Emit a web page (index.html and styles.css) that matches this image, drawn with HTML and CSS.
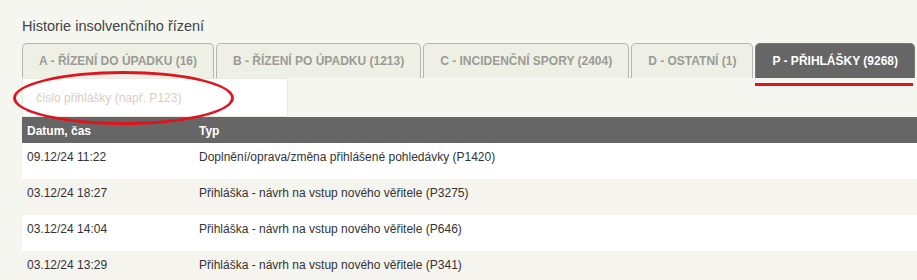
FILE: index.html
```html
<!DOCTYPE html>
<html lang="cs">
<head>
    <meta charset="UTF-8">
    <meta name="viewport" content="width=device-width, initial-scale=1.0">
    <title>Historie insolvenčního řízení</title>
    <link rel="stylesheet" href="styles.css">
</head>
<body>
    <div class="page">
        <h2 class="title">Historie insolvenčního řízení</h2>

        <!-- Záložky oddílů -->
        <div class="tabs">
            <div class="tab">A - Řízení do úpadku (16)</div>
            <div class="tab">B - Řízení po úpadku (1213)</div>
            <div class="tab">C - Incidenční spory (2404)</div>
            <div class="tab">D - Ostatní (1)</div>
            <div class="tab active">P - Přihlášky (9268)</div>
            <div class="tab">&nbsp;</div>
        </div>

        <input class="search" type="text" placeholder="číslo přihlášky (např. P123)">

        <table class="history">
            <thead>
                <tr>
                    <th class="col-date">Datum, čas</th>
                    <th>Typ</th>
                </tr>
            </thead>
            <tbody>
                <tr>
                    <td>09.12/24 11:22</td>
                    <td>Doplnění/oprava/změna přihlášené pohledávky (P1420)</td>
                </tr>
                <tr>
                    <td>03.12/24 18:27</td>
                    <td>Přihláška - návrh na vstup nového věřitele (P3275)</td>
                </tr>
                <tr>
                    <td>03.12/24 14:04</td>
                    <td>Přihláška - návrh na vstup nového věřitele (P646)</td>
                </tr>
                <tr>
                    <td>03.12/24 13:29</td>
                    <td>Přihláška - návrh na vstup nového věřitele (P341)</td>
                </tr>
            </tbody>
        </table>

        <!-- zvýraznění -->
        <div class="mark-ellipse"></div>
    </div>
</body>
</html>
```

FILE: styles.css
```css
html, body { margin: 0; height: 100%; overflow: hidden; }
body { font-family: "Liberation Sans", Arial, sans-serif; background-color: #f4f6ef; color: #333; }

.page {
    position: relative;
    padding: 16px 0 0 22px;
}

.title {
    margin: 0 0 7px;
    font-size: 14.5px;
    line-height: 20px;
    font-weight: normal;
    color: #444;
}

.tabs {
    display: flex;
    gap: 2px;
    height: 35px;
}

.tab {
    position: relative;
    flex-shrink: 0;
    padding: 0 16px;
    border: 1px solid #b5b5af;
    border-bottom: none;
    border-radius: 5px 5px 0 0;
    background-color: #eef0e6;
    color: #9b9b95;
    font-size: 12px;
    font-weight: bold;
    line-height: 34px;
    text-transform: uppercase;
    white-space: nowrap;
}

.tab.active {
    background-color: #666;
    border-color: #777;
    color: #fff;
}

/* červené podtržení aktivní záložky */
.tab.active::after {
    content: "";
    position: absolute;
    left: -1px;
    right: 1px;
    bottom: -8px;
    height: 3px;
    background-color: #e0141e;
}

.search {
    display: block;
    box-sizing: border-box;
    width: 266px;
    height: 39px;
    margin: 0;
    padding: 0 13px;
    border: 1px solid #ebe8e0;
    border-radius: 3px;
    background-color: #fff;
    font-family: inherit;
    font-size: 12px;
    outline: none;
}

.search::placeholder { color: #d8cec4; }

.history {
    width: 100%;
    border-collapse: collapse;
    font-size: 12px;
}

.history th {
    padding: 6px 5px 4px;
    line-height: 16px;
    background-color: #666;
    color: #fff;
    text-align: left;
}

.history th.col-date { width: 162px; }

.history td {
    padding: 6px 5px 14px;
    line-height: 16px;
    background-color: #fff;
    color: #333;
    vertical-align: top;
}

.history tbody tr:nth-child(even) td { background-color: #f6f4ee; }

.mark-ellipse {
    position: absolute;
    left: 13px;
    top: 71px;
    width: 215px;
    height: 48px;
    border: 3.5px solid #e0141e;
    border-radius: 50%;
    pointer-events: none;
}
```
